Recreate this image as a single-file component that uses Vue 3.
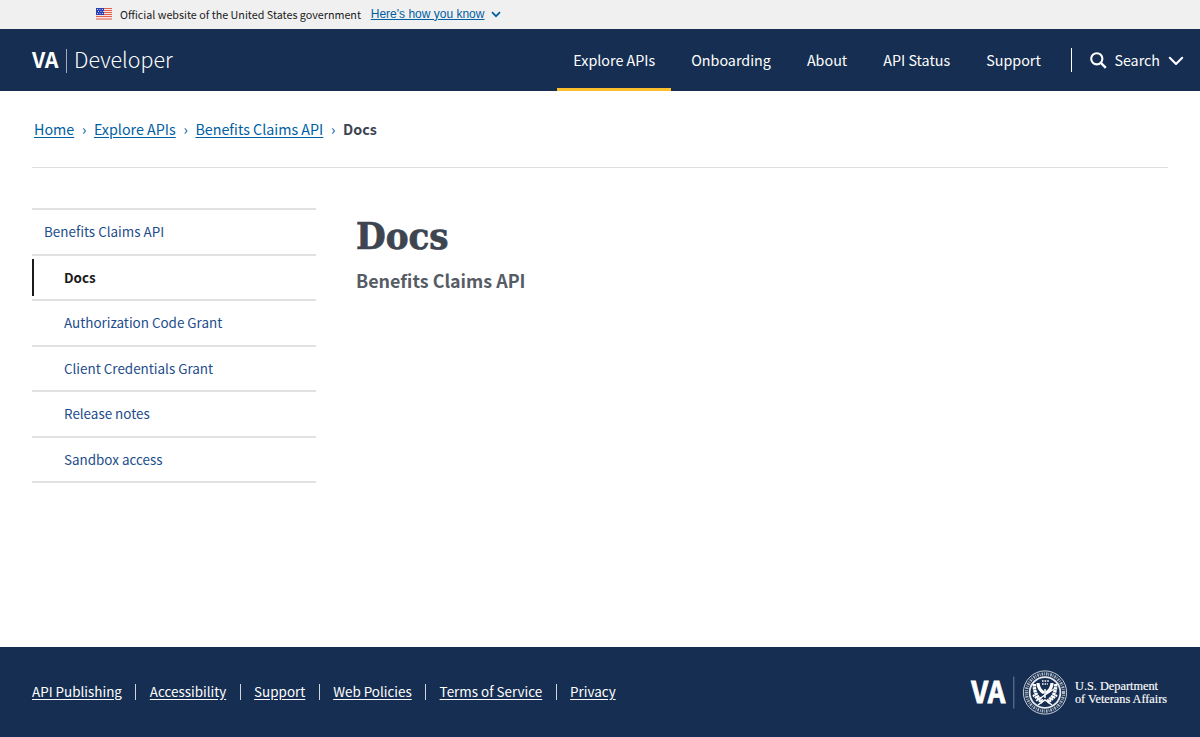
<script setup>
const nav = ['Explore APIs', 'Onboarding', 'About', 'API Status', 'Support']
const crumbs = ['Home', 'Explore APIs', 'Benefits Claims API']
const side = ['Benefits Claims API', 'Docs', 'Authorization Code Grant', 'Client Credentials Grant', 'Release notes', 'Sandbox access']
const links = ['API Publishing', 'Accessibility', 'Support', 'Web Policies', 'Terms of Service', 'Privacy']
</script>

<template>
  <div class="page">
    <div class="banner">
      <svg class="flag" width="16" height="12" viewBox="0 0 16 12">
        <rect width="16" height="12" fill="#f4e3df" />
        <path d="M0 .5h16M0 2.5h16M0 4.5h16M0 6.5h16M0 8.5h16M0 11h16" stroke="#e2604f" stroke-width="1" />
        <rect width="8" height="7" fill="#2b3fb5" />
        <path d="M1 1.5h6M2 3.5h6M1 5.5h6" stroke="#c9cff2" stroke-width="1" stroke-dasharray="1 1.5" />
      </svg>
      <span class="official">Official website of the United States government</span>
      <a class="how">Here's how you know</a>
      <svg class="caret" width="10" height="7" viewBox="0 0 10 7"><path d="M1 1.2 5 5.2 9 1.2" fill="none" stroke="#005ea2" stroke-width="1.7" /></svg>
    </div>

    <header class="header">
      <div class="brand"><b>VA</b><i class="bar"></i><span>Developer</span></div>
      <nav class="nav">
        <a v-for="(n, i) in nav" :key="n" :class="{ active: i === 0 }">{{ n }}</a>
      </nav>
      <div class="search">
        <svg width="17" height="17" viewBox="0 0 17 17"><circle cx="6.8" cy="6.8" r="5.6" fill="none" stroke="#fff" stroke-width="2.1" /><path d="m10.9 10.9 4.9 4.9" stroke="#fff" stroke-width="2.4" /></svg>
        <span>Search</span>
        <svg class="chev" width="16" height="10" viewBox="0 0 16 10"><path d="m1.8 1.8 6.2 6.2 6.2-6.2" fill="none" stroke="#fff" stroke-width="2.1" stroke-linecap="round" stroke-linejoin="round" /></svg>
      </div>
    </header>

    <div class="crumbs">
      <template v-for="c in crumbs" :key="c"><a>{{ c }}</a><span class="sep">›</span></template>
      <b>Docs</b>
    </div>

    <div class="body">
      <ul class="side">
        <li v-for="(s, i) in side" :key="s" :class="{ sub: i > 0, current: i === 1 }"><a>{{ s }}</a></li>
      </ul>
      <main>
        <h1>Docs</h1>
        <h2>Benefits Claims API</h2>
      </main>
    </div>

    <footer class="footer">
      <div class="links"><a v-for="l in links" :key="l">{{ l }}</a></div>
      <svg class="logo" width="198" height="48" viewBox="0 0 198 48">
        <text class="mark" x="1.3" y="34.6" textLength="34" lengthAdjust="spacingAndGlyphs">VA</text>
        <path d="M43.8 8.5v32" stroke="#6f7f9a" />
        <g fill="none" stroke="#fff">
          <circle cx="75" cy="24.5" r="21.6" stroke-width=".9" opacity=".85" />
          <circle cx="75" cy="24.5" r="18.6" stroke-width="3.2" stroke-dasharray="1.6 .9 .8 1.1" opacity=".65" />
          <circle cx="75" cy="24.5" r="15.4" stroke-width="1.8" opacity=".9" />
          <path d="M64.5 16c-1 8 3 14 8 17M85.5 16c1 8-3 14-8 17" stroke-width="3.4" stroke-dasharray="2.5 .5" />
          <path d="M68 15c0 5 3 8 6 10M82 15c0 5-3 8-6 10" stroke-width="3.2" />
          <path d="m63 27 9 8M87 27l-9 8" stroke-width="2.2" stroke-dasharray="2 .7" />
          <path d="m66 33 18-12M68 37l7-5 7 5M75 21v9" stroke-width="1.5" />
          <path d="M72 13h7M72 16h6" stroke-width="1.6" stroke-dasharray="1.6 1" />
        </g>
        <text x="105" y="22" textLength="83" lengthAdjust="spacingAndGlyphs">U.S. Department</text>
        <text x="105" y="34.5" textLength="92" lengthAdjust="spacingAndGlyphs">of Veterans Affairs</text>
      </svg>
    </footer>
  </div>
</template>

<style>
body { margin: 0; background: #fff; }
</style>

<style scoped>
.page { width: 1200px; height: 737px; display: flex; flex-direction: column; overflow: hidden; font-family: "Noto Sans CJK SC", "Noto Sans", sans-serif; }
a { white-space: nowrap; }
.banner { height: 29px; box-sizing: border-box; padding-left: 96px; background: #f0f0f0; display: flex; align-items: center; }
.flag { margin-top: -1px; }
.official { margin: 0 0 0 8px; font-size: 10.75px; line-height: 20px; color: #1b1b1b; white-space: nowrap; }
.how { margin: -2px 0 0 9.8px; font: 12px/16px "Liberation Sans", sans-serif; color: #005ea2; text-decoration: underline; }
.caret { margin-left: 6.6px; }
.header { height: 62px; background: #162e51; color: #fff; display: flex; }
.brand { flex: 1; margin-left: 32px; height: 62px; display: flex; align-items: center; line-height: 60px; font-size: 21.4px; }
.brand b, .brand span { margin-top: -2px; }
.brand span { font-weight: 300; }
.bar { width: 1px; height: 24px; margin: 1px 7.2px 0 7.3px; background: #a2abb9; }
.nav { display: flex; gap: 4px; }
.nav a { height: 59px; line-height: 61px; padding: 0 16px; font-size: 14.32px; border-bottom: 3px solid transparent; }
.nav .active { border-color: #ffbe2e; }
.search { margin: 19px 16px 0 14.4px; height: 24px; padding-left: 17.8px; border-left: 1px solid #fff; display: flex; align-items: center; font-size: 14.3px; line-height: 24px; }
.search span { margin: 0 8px 0 7.4px; }
.search .chev { margin-top: 1px; }
.crumbs { height: 76px; margin: 0 32px; padding-left: 2px; border-bottom: 1px solid #dcdee0; display: flex; line-height: 75px; font-size: 14.3px; color: #3d4551; }
.crumbs a { color: #005ea2; text-decoration: underline; text-underline-offset: 2px; }
.crumbs .sep { width: 19.7px; text-align: center; color: #005ea2; font-size: 14.3px; }
.body { flex: 1; display: flex; margin: 40px 32px 0; gap: 40px; }
.side { width: 284px; margin: 0; padding: 0; list-style: none; }
.side li { height: 45.5px; box-sizing: border-box; border-top: 2px solid #dfe1e2; padding: 3px 0; }
.side li:last-child { height: 47.5px; border-bottom: 2px solid #dfe1e2; }
.side a { display: block; height: 37px; box-sizing: border-box; line-height: 37px; padding-left: 12px; font-size: 13.43px; color: #1d4d8c; }
.side .sub a { padding-left: 32px; }
.side .current a { border-left: 2px solid #1b1b1b; padding-left: 30px; color: #1b1b1b; font-weight: 700; }
h1 { margin: 5px 0 0; font: bold 38px/46px "DejaVu Serif Condensed", "DejaVu Serif", serif; color: #3d4551; -webkit-text-stroke: .7px #3d4551; }
h2 { margin: 8px 0 0; font-size: 17.9px; line-height: 26px; font-weight: 700; color: #565c65; }
.footer { height: 90px; flex: none; background: #162e51; display: flex; justify-content: space-between; }
.links { margin: -2px 0 0 32px; display: flex; align-items: center; }
.links a { color: #fff; font-size: 13.43px; line-height: 20px; text-decoration: underline; text-underline-offset: 2px; }
.links a + a { display: flex; }
.links a + a::before { content: ""; width: 1px; height: 16px; margin: 3px 13.45px 0; background: #d0d5dc; }
.logo { margin: 21px 32px 0 0; }
.logo text { font: 12px "Liberation Serif", serif; fill: #fff; stroke: #fff; stroke-width: .15px; }
.logo .mark { font: bold 29px "Noto Sans CJK SC", "Noto Sans", sans-serif; stroke-width: .8px; }
</style>
